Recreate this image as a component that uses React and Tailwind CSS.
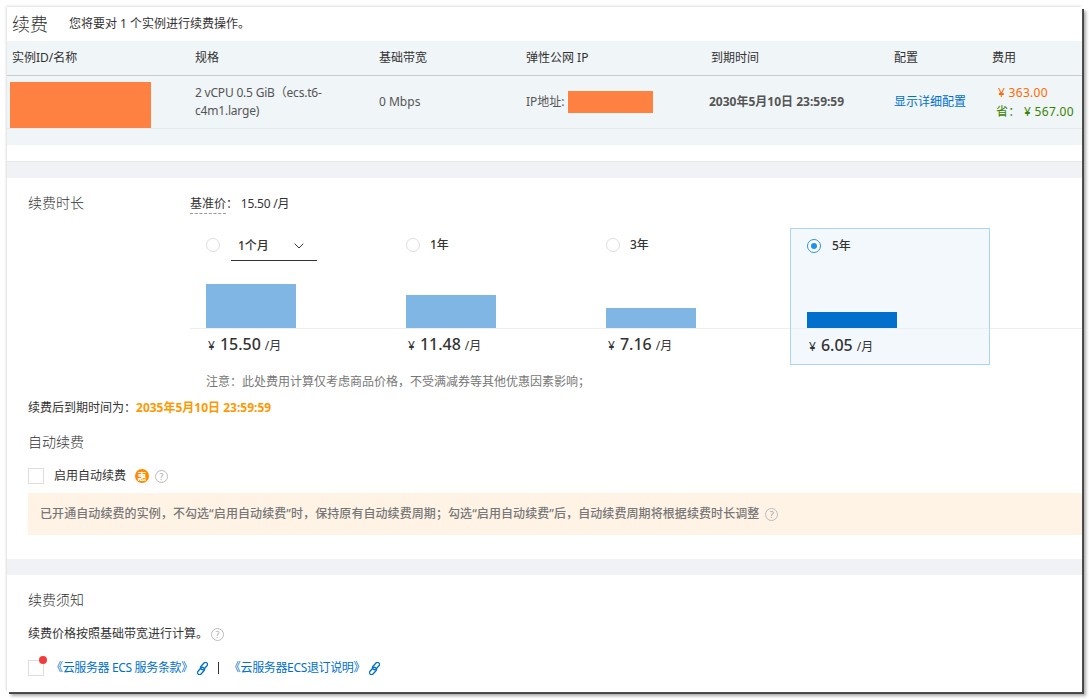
import { ChevronDown } from 'lucide-react'

const font = { cjk: 'font-["Noto_Sans","Noto_Sans_CJK_SC",sans-serif]' }

const columns = 'grid grid-cols-[183px_184px_147px_185px_183px_98px_95px]'

function Help({ className }) {
  return (
    <span className={`inline-flex h-[13px] w-[13px] items-center justify-center rounded-full border border-[#bbb] text-[9px] leading-none text-[#aaa] ${className || ''}`}>?</span>
  )
}

function ChainIcon({ className }) {
  return (
    <svg viewBox="0 0 11 13" width="11" height="13" fill="none" stroke="#0070cc" strokeWidth="1.3" className={className}>
      <rect x="5" y="-0.2" width="4" height="8.4" rx="2" transform="rotate(42 7 4)" />
      <rect x="2" y="4.8" width="4" height="8.4" rx="2" transform="rotate(42 4 9)" />
    </svg>
  )
}

function Radio({ checked }) {
  if (checked) {
    return (
      <span className="flex h-[14px] w-[14px] items-center justify-center rounded-full border border-[#2b8fe8] bg-white">
        <span className="h-[6px] w-[6px] rounded-full bg-[#1e90f0]"></span>
      </span>
    )
  }
  return <span className="h-[14px] w-[14px] rounded-full border border-[#ddd] bg-white"></span>
}

function Price({ value }) {
  return (
    <div className="flex items-baseline text-[#333]">
      <span className="text-[12px]">¥</span>
      <span className="ml-[5px] text-[16px] font-medium">{value}</span>
      <span className="ml-[4px] text-[12px]">/月</span>
    </div>
  )
}

function Option({ label, bar, price, select }) {
  return (
    <div className="w-[200px] shrink-0">
      <div className="flex h-[101px] flex-col justify-between border-b border-[#eee]">
        <div className="flex items-start pl-4 pt-[10px]">
          <Radio />
          {select ? (
            <div className="ml-[11px] -mt-[1px] flex h-[24px] w-[86px] items-start justify-between border-b border-[#333] pl-[7px] pr-[10px] text-[12px] leading-[18px] font-medium text-[#333]">
              <span>{label}</span>
              <ChevronDown size={16} strokeWidth={1.5} className="mt-[1px]" />
            </div>
          ) : (
            <span className="ml-[10px] text-[12px] leading-[14px] font-medium text-[#333]">{label}</span>
          )}
        </div>
        <div className={`ml-4 w-[90px] bg-[#80b6e4] ${bar}`}></div>
      </div>
      <div className="pl-[18px] pt-[3px]">
        <Price value={price} />
      </div>
    </div>
  )
}

export default function App() {
  return (
    <div className={`h-[699px] w-[1089px] overflow-hidden bg-white pl-[7px] pt-[7px] text-[12px] text-[#333] ${font.cjk}`}>
      <div className="h-[685px] w-[1075px] bg-white shadow-[-1px_-1px_2px_#ddd,2px_2px_0_#444,4px_4px_3px_#aaa]">
        <div className="flex h-[34px] items-center pl-[5px]">
          <h1 className="text-[18px] leading-[28px] font-light">续费</h1>
          <span className="ml-[21px] text-[12px]">您将要对 1 个实例进行续费操作。</span>
        </div>

        <div className={`${columns} h-[35px] items-center border-b border-[#c8ccd0] bg-[#f0f5f8] pl-0`}>
          {['实例ID/名称', '规格', '基础带宽', '弹性公网 IP', '到期时间', '配置', '费用'].map((title) => (
            <div key={title} className="pl-[5px]">{title}</div>
          ))}
        </div>

        <div className={`${columns} h-[53px] items-center border-b border-[#e6e8ea] bg-[#f0f5f8] text-[#555]`}>
          <div className="h-full pl-[3px] pt-[6px]">
            <div className="h-[46px] w-[141px] bg-[#ff8142]"></div>
          </div>
          <div className="pl-[5px] pr-[10px] leading-[18px] tracking-[-0.2px]">2 vCPU 0.5 GiB（ecs.t6-c4m1.large)</div>
          <div className="pl-[5px]">0 Mbps</div>
          <div className="flex items-center pl-[5px]">
            IP地址:
            <span className="ml-[3px] h-[22px] w-[85px] bg-[#ff8142]"></span>
          </div>
          <div className="pl-[3px] font-bold">2030年5月10日 23:59:59</div>
          <a className="pl-[5px] text-[#0070cc]">显示详细配置</a>
          <div className="text-[12px] leading-[19px] tracking-[0.3px]">
            <div className="pl-[11px] text-[#ff6a00]">¥ 363.00</div>
            <div className="pl-[9px] text-[#3a8300]">省： ¥ 567.00</div>
          </div>
        </div>

        <div className="h-[16px] bg-[#f0f5f8]"></div>
        <div className="h-[16px] bg-white"></div>
        <div className="h-[17px] border-t border-[#e6e8ea] bg-[#f0f2f5]"></div>

        <section className="h-[381px] pl-[21px] pt-[18px]">
          <div className="flex h-[16px] items-center">
            <span className="mb-[4px] w-[162px] text-[14px] font-light">续费时长</span>
            <span className="border-b border-dashed border-[#999]">基准价</span>
            <span className="tracking-[-0.2px]">： 15.50 /月</span>
          </div>

          <div className="ml-[162px] mt-[16px] flex">
            <Option label="1个月" bar="h-[44px]" price="15.50" select />
            <Option label="1年" bar="h-[33px]" price="11.48" />
            <Option label="3年" bar="h-[20px]" price="7.16" />
            <div className="h-[137px] w-[200px] shrink-0 border border-[#acd5f5] bg-[#f3f8fc]">
              <div className="flex h-[100px] flex-col justify-between border-b border-[#eee]">
                <div className="flex items-start pl-4 pt-[10px]">
                  <Radio checked />
                  <span className="ml-[11px] leading-[14px] font-medium">5年</span>
                </div>
                <div className="ml-4 h-[16px] w-[90px] bg-[#0070cc]"></div>
              </div>
              <div className="pl-[18px] pt-[4px]">
                <Price value="6.05" />
              </div>
            </div>
            <div className="h-[101px] flex-1 border-b border-[#eee]"></div>
          </div>

          <p className="ml-[178px] mt-[8px] leading-[18px] text-[#777]">注意：此处费用计算仅考虑商品价格，不受满减券等其他优惠因素影响；</p>

          <div className="mt-[8px] leading-[18px]">
            续费后到期时间为：<span className="font-bold text-[#ff9800]">2035年5月10日 23:59:59</span>
          </div>

          <div className="mt-[16px] text-[14px] leading-[18px] font-light">自动续费</div>

          <div className="mt-[16px] flex items-center">
            <span className="h-[16px] w-[16px] border border-[#ddd] bg-white"></span>
            <span className="ml-[10px]">启用自动续费</span>
            <span className="ml-[9px] flex h-[14px] w-[14px] items-center justify-center rounded-full bg-[#ff8a00] text-[9px] leading-none font-bold text-white">惠</span>
            <Help className="ml-[6px]" />
          </div>

          <div className="mt-[8px] flex h-[42px] items-center bg-[#fff3e6] pl-[12px] font-medium tracking-[0.08px] text-[#777]">
            已开通自动续费的实例，不勾选“启用自动续费”时，保持原有自动续费周期；勾选“启用自动续费”后，自动续费周期将根据续费时长调整
            <Help className="ml-[6px]" />
          </div>
        </section>

        <div className="h-[16px] bg-[#f0f2f5]"></div>

        <section className="pl-[21px] pt-[16px]">
          <div className="text-[14px] leading-[18px] font-light">续费须知</div>
          <div className="mt-[16px] flex items-center leading-[18px]">
            续费价格按照基础带宽进行计算。
            <Help className="ml-[3px]" />
          </div>
          <div className="mt-[16px] flex items-center">
            <span className="relative h-[16px] w-[16px] border border-[#ddd] bg-white">
              <span className="absolute -right-[4px] -top-[5px] h-[8px] w-[8px] rounded-full bg-[#f23c3c]"></span>
            </span>
            <a className="ml-[7px] tracking-[-0.35px] text-[#0070cc]">《云服务器 ECS 服务条款》</a>
            <ChainIcon className="ml-[4px]" />
            <span className="ml-[10px] h-[12px] w-px bg-[#333]"></span>
            <a className="ml-[10px] tracking-[-0.35px] text-[#0070cc]">《云服务器ECS退订说明》</a>
            <ChainIcon className="ml-[4px]" />
          </div>
        </section>
      </div>
    </div>
  )
}
